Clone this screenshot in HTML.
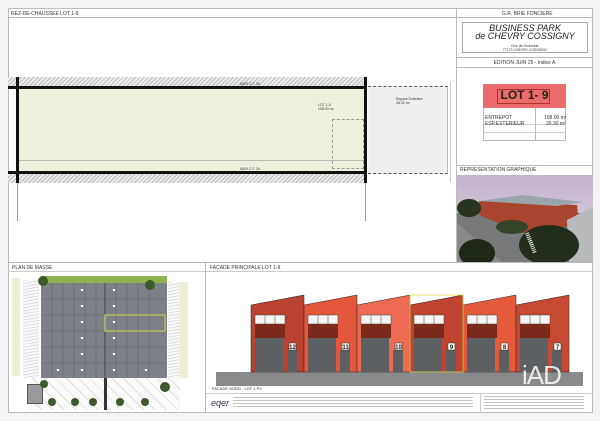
<!DOCTYPE html>
<html><head><meta charset="utf-8"><style>
*{margin:0;padding:0;box-sizing:border-box}
body{width:600px;height:421px;background:#f4f4f4;font-family:"Liberation Sans",sans-serif;position:relative;overflow:hidden}
.a{position:absolute}
.t{position:absolute;font-size:5px;color:#333;white-space:nowrap}
.hatch{background:repeating-linear-gradient(135deg,#bbb 0 1px,#eee 1px 3px)}
</style></head><body>
<div class="a" style="left:8px;top:8px;width:585px;height:405px;background:#fff;border:1px solid #bbb"></div>
<div class="a" style="left:8px;top:17px;width:585px;height:1px;background:#bbb"></div>
<div class="t" style="left:11px;top:11px">REZ-DE-CHAUSSEE LOT 1-9</div>
<div class="a" style="left:456px;top:8px;width:1px;height:254px;background:#bbb"></div>
<div class="t" style="left:502px;top:11px">G.R. BRIE FONCIERE</div>
<div class="a" style="left:462px;top:22px;width:126px;height:31px;border:1px solid #aaa"></div>
<div class="t" style="left:462px;top:24px;width:126px;text-align:center;font-size:9px;font-style:italic;line-height:8px;color:#222">BUSINESS PARK<br>de CHEVRY COSSIGNY</div>
<div class="t" style="left:462px;top:44px;width:126px;text-align:center;font-size:3.5px;line-height:4px">Rue de l'Industrie<br>77173 CHEVRY-COSSIGNY</div>
<div class="a" style="left:456px;top:57px;width:137px;height:1px;background:#bbb"></div>
<div class="a" style="left:456px;top:67px;width:137px;height:1px;background:#bbb"></div>
<div class="t" style="left:456px;top:60px;width:137px;text-align:center">EDITION JUIN 25 - indice A</div>
<div class="a" style="left:483px;top:84px;width:83px;height:24px;background:#ec6c6c"></div>
<div class="a" style="left:497px;top:89px;width:53px;height:15px;border:1px solid #a33"></div>
<div class="t" style="left:483px;top:88px;width:83px;text-align:center;font-size:12px;font-weight:bold;color:#222">LOT 1- 9</div>
<div class="a" style="left:483px;top:108px;width:83px;height:33px;border:1px solid #bbb;border-top:none"></div>
<div class="a" style="left:535px;top:108px;width:1px;height:33px;background:#bbb"></div>
<div class="a" style="left:483px;top:124px;width:83px;height:1px;background:#ccc"></div>
<div class="a" style="left:483px;top:132px;width:83px;height:1px;background:#ccc"></div>
<div class="t" style="left:485px;top:115px">ENTREPOT</div><div class="t" style="left:544px;top:115px">108.00 m²</div>
<div class="t" style="left:485px;top:121px">ESP.EXTERIEUR</div><div class="t" style="left:546px;top:121px">26.30 m²</div>
<div class="a" style="left:456px;top:165px;width:137px;height:1px;background:#bbb"></div>
<div class="t" style="left:460px;top:167px">REPRESENTATION GRAPHIQUE</div>
<svg class="a" style="left:457px;top:175px" width="136" height="87" viewBox="0 0 136 87">
<defs><linearGradient id="s" x1="0" y1="0" x2="0" y2="1"><stop offset="0" stop-color="#c2b2cc"/><stop offset="1" stop-color="#e6dbe4"/></linearGradient></defs>
<rect width="136" height="87" fill="url(#s)"/>
<rect y="38" width="136" height="49" fill="#77797b"/>
<polygon points="22,26 120,30 122,50 65,58 22,40" fill="#a8452f"/>
<polygon points="22,26 65,20 126,27 100,31" fill="#9aa2aa"/>
<polygon points="110,45 136,32 136,87 112,87" fill="#b9babb"/>
<path d="M0,48 L45,87 L0,87Z" fill="#888a8c"/>
<ellipse cx="12" cy="33" rx="12" ry="9" fill="#263420"/>
<ellipse cx="20" cy="78" rx="18" ry="14" fill="#1d2817"/>
<ellipse cx="92" cy="70" rx="30" ry="20" fill="#222d1c"/>
<ellipse cx="55" cy="52" rx="16" ry="7" fill="#34432a"/>
<path d="M70,58 l8,20" stroke="#eee" stroke-width="4" stroke-dasharray="1 1"/>
</svg>
<!-- plan -->
<div class="a hatch" style="left:8px;top:77px;width:358px;height:10px"></div>
<div class="a hatch" style="left:8px;top:173px;width:358px;height:10px"></div>
<div class="a" style="left:8px;top:86px;width:358px;height:3px;background:#111"></div>
<div class="a" style="left:8px;top:171px;width:358px;height:3px;background:#111"></div>
<div class="a" style="left:16px;top:77px;width:3px;height:106px;background:#111"></div>
<div class="a" style="left:364px;top:77px;width:3px;height:106px;background:#111"></div>
<div class="a" style="left:19px;top:89px;width:345px;height:82px;background:#f0f0df"></div>
<div class="a" style="left:332px;top:119px;width:32px;height:50px;border:1px dashed #999"></div>
<div class="a" style="left:368px;top:86px;width:80px;height:88px;border-top:1px dashed #555;border-bottom:1px dashed #555;border-right:1px solid #bbb;background:#f2f2f3"></div>
<div class="a" style="left:370px;top:88px;width:71px;height:84px;background:#eceef0"></div>
<div class="t" style="left:318px;top:103px;font-size:3.5px">LOT 1-9<br>108.00 m²</div>
<div class="t" style="left:396px;top:97px;font-size:3.5px">Espace Exterieur<br>26.30 m²</div>
<div class="t" style="left:240px;top:82px;font-size:3.5px">MUR C.F. 2h</div>
<div class="t" style="left:240px;top:167px;font-size:3.5px">MUR C.F. 2h</div>
<div class="a" style="left:19px;top:160px;width:345px;height:1px;background:#bbb"></div>
<div class="a" style="left:17px;top:183px;width:1px;height:38px;background:#999"></div>
<div class="a" style="left:365px;top:183px;width:1px;height:38px;background:#999"></div>
<div class="a" style="left:450px;top:82px;width:1px;height:100px;background:#ccc"></div>
<!-- bottom -->
<div class="a" style="left:8px;top:262px;width:585px;height:1px;background:#bbb"></div>
<div class="a" style="left:8px;top:271px;width:585px;height:1px;background:#ccc"></div>
<div class="a" style="left:205px;top:262px;width:1px;height:151px;background:#bbb"></div>
<div class="t" style="left:12px;top:265px">PLAN DE MASSE</div>
<div class="t" style="left:210px;top:265px">FACADE PRINCIPALE LOT 1-9</div>
<div class="a" style="left:12px;top:278px;width:8px;height:98px;background:#eeeed5"></div>
<div class="a" style="left:180px;top:282px;width:8px;height:96px;background:#eeeed5"></div>
<div class="a" style="left:23px;top:280px;width:16px;height:98px;background:repeating-linear-gradient(170deg,#ddd 0 1px,#fafafa 1px 3px)"></div>
<div class="a" style="left:168px;top:282px;width:12px;height:96px;background:repeating-linear-gradient(170deg,#ddd 0 1px,#fafafa 1px 3px)"></div>
<div class="a" style="left:41px;top:276px;width:126px;height:7px;background:#8fb14e"></div>
<svg class="a" style="left:41px;top:283px" width="126" height="95">
<rect width="126" height="95" fill="#7c8087"/>
<g stroke="#5f636a" stroke-width=".6">
<line x1="0" y1="16" x2="126" y2="16"/><line x1="0" y1="32" x2="126" y2="32"/><line x1="0" y1="48" x2="126" y2="48"/><line x1="0" y1="64" x2="126" y2="64"/><line x1="0" y1="80" x2="126" y2="80"/>
<line x1="11" y1="0" x2="11" y2="95"/><line x1="22" y1="0" x2="22" y2="95"/><line x1="33" y1="0" x2="33" y2="95"/><line x1="44" y1="0" x2="44" y2="95"/><line x1="55" y1="0" x2="55" y2="95"/><line x1="75" y1="0" x2="75" y2="95"/><line x1="86" y1="0" x2="86" y2="95"/><line x1="97" y1="0" x2="97" y2="95"/><line x1="108" y1="0" x2="108" y2="95"/>
</g><line x1="64" y1="0" x2="64" y2="95" stroke="#444"/>
<rect x="64" y="32" width="60" height="16" fill="none" stroke="#d6d84a"/>
<g fill="#fff"><rect x="40" y="6" width="2" height="2"/><rect x="40" y="22" width="2" height="2"/><rect x="40" y="38" width="2" height="2"/><rect x="40" y="54" width="2" height="2"/><rect x="40" y="70" width="2" height="2"/><rect x="40" y="86" width="2" height="2"/><rect x="72" y="6" width="2" height="2"/><rect x="72" y="22" width="2" height="2"/><rect x="72" y="38" width="2" height="2"/><rect x="72" y="54" width="2" height="2"/><rect x="72" y="70" width="2" height="2"/><rect x="72" y="86" width="2" height="2"/><rect x="16" y="86" width="2" height="2"/><rect x="104" y="86" width="2" height="2"/></g>
</svg>
<div class="a" style="left:30px;top:378px;width:150px;height:32px;background:repeating-linear-gradient(45deg,#ddd 0 1px,#fafafa 1px 8px)"></div>
<div class="a" style="left:27px;top:384px;width:16px;height:20px;background:#999;border:1px solid #555"></div>
<div class="a" style="left:104px;top:378px;width:3px;height:32px;background:#333"></div>
<svg class="a" style="left:30px;top:272px" width="150" height="140"><g fill="#3c5a2a">
<circle cx="13" cy="9" r="5"/><circle cx="120" cy="13" r="5"/><circle cx="14" cy="112" r="4"/><circle cx="22" cy="130" r="4"/><circle cx="45" cy="130" r="4"/><circle cx="63" cy="130" r="4"/><circle cx="90" cy="130" r="4"/><circle cx="115" cy="130" r="4"/><circle cx="135" cy="115" r="5"/></g></svg>
<div class="a" style="left:216px;top:372px;width:367px;height:14px;background:#8a8a8a"></div>
<svg class="a" style="left:245px;top:285px" width="340" height="90">
<g stroke="#222" stroke-width=".5">
<polygon points="6,20 59,10 59,87 6,87" fill="#b8432f"/>
<polygon points="59,20 112,10 112,87 59,87" fill="#e4573c"/>
<polygon points="112,20 165,10 165,87 112,87" fill="#ec6b52"/>
<polygon points="165,20 218,10 218,87 165,87" fill="#c0442f"/>
<polygon points="218,20 271,10 271,87 218,87" fill="#e65a3c"/>
<polygon points="271,20 324,10 324,87 271,87" fill="#c54a31"/>
</g>
<g id="u">
<rect x="10" y="30" width="30" height="9" fill="#f4f4f4" stroke="#444" stroke-width=".5"/>
<line x1="20" y1="30" x2="20" y2="39" stroke="#444" stroke-width=".5"/><line x1="30" y1="30" x2="30" y2="39" stroke="#444" stroke-width=".5"/>
<rect x="10" y="39" width="30" height="14" fill="#7b2a1c"/>
<rect x="10" y="53" width="28" height="34" fill="#5d6063"/>
<rect x="42" y="65" width="10" height="22" fill="#5d6063"/>
<rect x="44" y="58" width="7" height="7" fill="#fff" stroke="#222" stroke-width=".5"/>
</g>
<use href="#u" x="53"/><use href="#u" x="106"/><use href="#u" x="159"/><use href="#u" x="212"/><use href="#u" x="265"/>
<rect x="165" y="10" width="53" height="77" fill="none" stroke="#d8d54c" stroke-width=".8"/>
<g font-family="Liberation Sans" font-size="6" font-weight="bold" fill="#222" text-anchor="middle">
<text x="47.5" y="64">12</text><text x="100.5" y="64">11</text><text x="153.5" y="64">10</text><text x="206.5" y="64">9</text><text x="259.5" y="64">8</text><text x="312.5" y="64">7</text></g>
</svg>
<div class="t" style="left:212px;top:386px;font-size:4px">FACADE NORD - LOT 1 PV</div>
<div class="t" style="left:522px;top:360px;font-size:26px;color:#fff;opacity:.85;letter-spacing:-1px">iAD</div>
<div class="a" style="left:206px;top:393px;width:387px;height:1px;background:#ccc"></div>
<div class="a" style="left:480px;top:393px;width:1px;height:20px;background:#ccc"></div>
<div class="t" style="left:211px;top:398px;font-size:9px;font-style:italic;color:#335">eqer</div>
<div class="a" style="left:233px;top:397px;width:240px;height:12px;background:repeating-linear-gradient(180deg,#999 0 1px,#fff 1px 3px);opacity:.6"></div>
<div class="a" style="left:484px;top:396px;width:100px;height:14px;background:repeating-linear-gradient(180deg,#999 0 1px,#fff 1px 3px);opacity:.6"></div>
</body></html>
